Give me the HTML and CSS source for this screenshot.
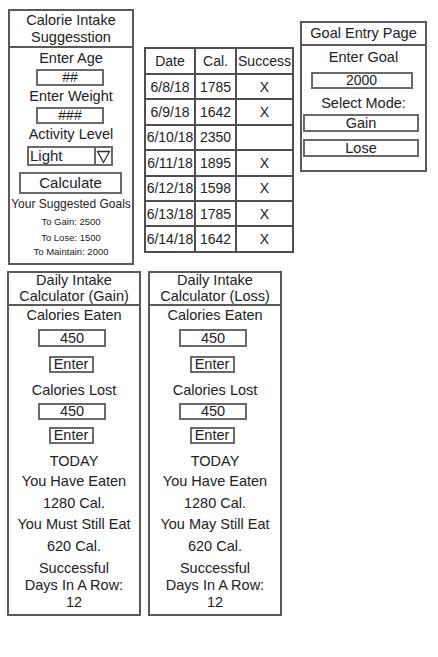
FILE: index.html
```html
<!DOCTYPE html>
<html lang="en">
<head>
<meta charset="utf-8">
<title>Calorie Tracker Mockup</title>
<link rel="stylesheet" href="styles.css">
</head>
<body>
<div class="page">
  <div class="row row-top">
    <section class="panel suggest">
      <h2 class="panel-title suggest-title">Calorie Intake<br>Suggesstion</h2>
      <div class="panel-body">
        <div class="label s-age">Enter Age</div>
        <div class="field s-field s-f1">##</div>
        <div class="label s-weight">Enter Weight</div>
        <div class="field s-field s-f2">###</div>
        <div class="label s-act">Activity Level</div>
        <div class="select">
          <span class="select-value">Light</span>
          <span class="select-arrow">
            <svg width="15" height="15" viewBox="0 0 15 15"><path d="M1.5 2.5 L13.5 2.5 L7.5 13.5 Z" fill="none" stroke="#333" stroke-width="1.3" stroke-linejoin="miter"/></svg>
          </span>
        </div>
        <div class="btn calc">Calculate</div>
        <div class="goals-title">Your Suggested Goals</div>
        <div class="goal-line g1">To Gain: 2500</div>
        <div class="goal-line g2">To Lose: 1500</div>
        <div class="goal-line g3">To Maintain: 2000</div>
      </div>
    </section>

    <table class="log">
      <thead>
        <tr><th>Date</th><th>Cal.</th><th>Success</th></tr>
      </thead>
      <tbody>
        <tr><td>6/8/18</td><td>1785</td><td>X</td></tr>
        <tr><td>6/9/18</td><td>1642</td><td>X</td></tr>
        <tr><td>6/10/18</td><td>2350</td><td></td></tr>
        <tr><td>6/11/18</td><td>1895</td><td>X</td></tr>
        <tr><td>6/12/18</td><td>1598</td><td>X</td></tr>
        <tr><td>6/13/18</td><td>1785</td><td>X</td></tr>
        <tr><td>6/14/18</td><td>1642</td><td>X</td></tr>
      </tbody>
    </table>

    <section class="panel goal">
      <h2 class="panel-title goal-title">Goal Entry Page</h2>
      <div class="panel-body">
        <div class="label gl-enter">Enter Goal</div>
        <div class="field goal-field">2000</div>
        <div class="label gl-mode">Select Mode:</div>
        <div class="mode mode-gain">Gain</div>
        <div class="mode mode-lose">Lose</div>
      </div>
    </section>
  </div>

  <div class="row row-bottom">
    <section class="panel daily">
      <h2 class="panel-title daily-title">Daily Intake<br>Calculator (Gain)</h2>
      <div class="panel-body">
        <div class="label">Calories Eaten</div>
        <div class="field d-field d-f1">450</div>
        <div class="btn enter e1">Enter</div>
        <div class="label d-lost">Calories Lost</div>
        <div class="field d-field d-f2">450</div>
        <div class="btn enter e2">Enter</div>
        <div class="label d-today">TODAY</div>
        <div class="label d-l2">You Have Eaten</div>
        <div class="label d-l3">1280 Cal.</div>
        <div class="label d-l4">You Must Still Eat</div>
        <div class="label d-l5">620 Cal.</div>
        <div class="streak">Successful<br>Days In A Row:<br>12</div>
      </div>
    </section>

    <section class="panel daily loss">
      <h2 class="panel-title daily-title">Daily Intake<br>Calculator (Loss)</h2>
      <div class="panel-body">
        <div class="label">Calories Eaten</div>
        <div class="field d-field d-f1">450</div>
        <div class="btn enter e1">Enter</div>
        <div class="label d-lost">Calories Lost</div>
        <div class="field d-field d-f2">450</div>
        <div class="btn enter e2">Enter</div>
        <div class="label d-today">TODAY</div>
        <div class="label d-l2">You Have Eaten</div>
        <div class="label d-l3">1280 Cal.</div>
        <div class="label d-l4">You May Still Eat</div>
        <div class="label d-l5">620 Cal.</div>
        <div class="streak">Successful<br>Days In A Row:<br>12</div>
      </div>
    </section>
  </div>
</div>
</body>
</html>
```

FILE: styles.css
```css
* { box-sizing: border-box; }

html, body {
  margin: 0;
  padding: 0;
  background: #ffffff;
}

body {
  font-family: "Liberation Sans", Arial, sans-serif;
  font-size: 14.5px;
  color: #222;
}

.page {
  width: 438px;
  height: 657px;
}

.row {
  display: flex;
  align-items: flex-start;
}

.row-top {
  padding: 9px 0 0 8px;
}

.row-bottom {
  padding-left: 7px;
  margin-top: 6px;
}

/* ---------- panels ---------- */
.panel {
  border: 2px solid #5a5a5a;
  display: flex;
  flex-direction: column;
}

.panel-title {
  margin: 0;
  font-weight: normal;
  font-size: 14.5px;
  line-height: 17px;
  text-align: center;
  border-bottom: 2px solid #5a5a5a;
  white-space: nowrap;
}

.suggest-title {
  padding-top: 1px;
}

.panel-body {
  display: flex;
  flex-direction: column;
  align-items: center;
  text-align: center;
}

.label {
  font-size: 14.5px;
  line-height: 18px;
  white-space: nowrap;
}

.field {
  border: 2px solid #6a6a6a;
  text-align: center;
  font-size: 14px;
  white-space: nowrap;
}

.btn {
  border: 2px solid #6a6a6a;
  text-align: center;
  white-space: nowrap;
}

/* ---------- suggestion panel ---------- */
.suggest {
  width: 126px;
  height: 256px;
}

.s-age { margin-top: 1px; }
.s-weight, .s-act { margin-top: 1px; }

.s-field {
  width: 68px;
  height: 17px;
  line-height: 13px;
  margin-top: 2px;
  margin-left: -2px;
}

.select {
  margin-top: 3px;
  width: 86px;
  height: 20px;
  border: 2px solid #6a6a6a;
  display: flex;
  align-items: stretch;
  margin-left: -2px;
}

.select-value {
  flex: 1;
  text-align: left;
  padding-left: 1px;
  font-size: 15px;
  line-height: 16px;
}

.select-arrow {
  width: 17px;
  border-left: 2px solid #6a6a6a;
  display: flex;
  align-items: center;
  justify-content: center;
}

.calc {
  margin-top: 6px;
  width: 103px;
  height: 22px;
  font-size: 15px;
  line-height: 18px;
  margin-left: -1px;
}

.goals-title {
  margin-top: 2px;
  font-size: 12px;
  line-height: 16px;
  white-space: nowrap;
}

.goal-line {
  font-size: 9.5px;
  line-height: 14px;
  white-space: nowrap;
}
.g1 { margin-top: 3px; }
.g2 { margin-top: 2px; }
.g3 { margin-top: 0; }

/* ---------- log table ---------- */
.log {
  margin-left: 10px;
  margin-top: 38px;
  width: 150px;
  border-collapse: separate;
  border-spacing: 0;
  border-top: 2px solid #4f4f4f;
  border-left: 2px solid #4f4f4f;
  table-layout: fixed;
}

.log th,
.log td {
  padding: 0;
  height: 25.4px;
  font-weight: normal;
  font-size: 14px;
  text-align: center;
  white-space: nowrap;
  border-right: 2px solid #4f4f4f;
  border-bottom: 2px solid #4f4f4f;
  color: #222;
}

.log th:nth-child(1), .log td:nth-child(1) { width: 50px; }
.log th:nth-child(2), .log td:nth-child(2) { width: 41px; }
.log th:nth-child(3), .log td:nth-child(3) { width: 57px; }

.log th { height: 26px; }

/* ---------- goal panel ---------- */
.goal {
  margin-left: 6px;
  margin-top: 12px;
  width: 127px;
  height: 151px;
}

.goal-title {
  line-height: 21px;
}

.gl-enter { margin-top: 2px; }

.goal-field {
  margin-top: 6px;
  width: 102px;
  height: 17px;
  line-height: 13px;
  font-size: 14px;
  margin-left: -4px;
}

.gl-mode { margin-top: 5px; }

.mode {
  align-self: flex-start;
  margin-left: 1px;
  width: 116px;
  height: 18px;
  border: 2px solid #6a6a6a;
  font-size: 14.5px;
  line-height: 14px;
  text-align: center;
}
.mode-gain { margin-top: 2px; }
.mode-lose { margin-top: 7px; }

/* ---------- daily panels ---------- */
.daily {
  width: 134px;
  height: 345px;
}

.loss {
  margin-left: 7px;
}

.daily-title {
  line-height: 15.5px;
}

.d-field {
  width: 68px;
  height: 18px;
  line-height: 14px;
  font-size: 14.5px;
  margin-left: -4px;
}
.d-f1 { margin-top: 5px; }
.d-f2 { margin-top: 4px; height: 17px; line-height: 13px; }

.enter {
  width: 45px;
  height: 17px;
  line-height: 13px;
  font-size: 14.5px;
  margin-left: -6px;
}
.e1 { margin-top: 9px; }
.e2 { margin-top: 7px; }

.d-lost { margin-top: 8px; }
.d-today { margin-top: 8px; }
.d-l2 { margin-top: 2px; }
.d-l3 { margin-top: 4px; }
.d-l4 { margin-top: 3px; }
.d-l5 { margin-top: 4px; }

.streak {
  margin-top: 5px;
  font-size: 14.5px;
  line-height: 17px;
}
```
